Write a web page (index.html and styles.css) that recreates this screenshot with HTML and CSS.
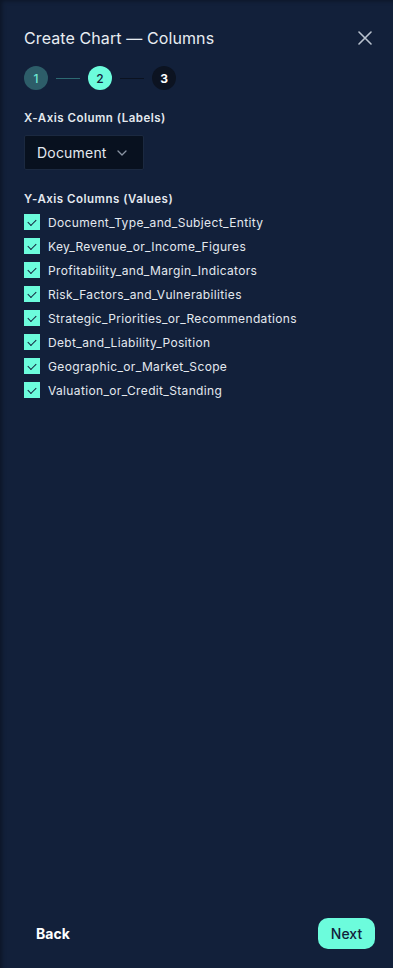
FILE: index.html
```html
<!DOCTYPE html>
<html lang="en">
<head>
    <meta charset="UTF-8">
    <meta name="viewport" content="width=device-width, initial-scale=1.0">
    <title>Create Chart</title>
    <link rel="stylesheet" href="styles.css">
</head>
<body>
    <div class="panel">
        <div class="header">
            <h1>Create Chart — Columns</h1>
            <button class="close" aria-label="Close">
                <svg width="14" height="14" viewBox="0 0 14 14"><path d="M1 1L13 13M13 1L1 13" stroke="#b9c2ce" stroke-width="1.6" stroke-linecap="round"/></svg>
            </button>
        </div>

        <div class="steps">
            <span class="step done">1</span>
            <span class="line done"></span>
            <span class="step active">2</span>
            <span class="line"></span>
            <span class="step">3</span>
        </div>

        <div class="field">
            <label class="field-label">X-Axis Column (Labels)</label>
            <div class="select">
                <span>Document</span>
                <svg width="10" height="6" viewBox="0 0 10 6"><path d="M1 1L5 5L9 1" stroke="#8a94a3" stroke-width="1.3" fill="none" stroke-linecap="round" stroke-linejoin="round"/></svg>
            </div>
        </div>

        <div class="field values">
            <label class="field-label">Y-Axis Columns (Values)</label>
            <ul class="checks">
                <li><span class="box"></span>Document_Type_and_Subject_Entity</li>
                <li><span class="box"></span>Key_Revenue_or_Income_Figures</li>
                <li><span class="box"></span>Profitability_and_Margin_Indicators</li>
                <li><span class="box"></span>Risk_Factors_and_Vulnerabilities</li>
                <li><span class="box"></span>Strategic_Priorities_or_Recommendations</li>
                <li><span class="box"></span>Debt_and_Liability_Position</li>
                <li><span class="box"></span>Geographic_or_Market_Scope</li>
                <li><span class="box"></span>Valuation_or_Credit_Standing</li>
            </ul>
        </div>

        <div class="footer">
            <button class="back">Back</button>
            <button class="next">Next</button>
        </div>
    </div>
</body>
</html>
```

FILE: styles.css
```css
body {
    margin: 0;
    background-color: #0d1728;
    font-family: Inter, "Noto Sans", sans-serif;
    color: #e4e9ef;
}
.panel {
    height: 968px;
    box-sizing: border-box;
    padding: 28px 18px 19px 24px;
    background-color: #12203a;
    box-shadow: inset 4px 3px 4px -2px rgba(0, 0, 0, 0.35);
    display: flex;
    flex-direction: column;
}
.header {
    display: flex;
    justify-content: space-between;
    align-items: center;
    height: 20px;
}
h1 {
    margin: 0;
    font-size: 16px;
    font-weight: 400;
    letter-spacing: 0.1px;
    color: #e8edf2;
}
.close {
    background: none;
    border: none;
    padding: 0;
    width: 14px;
    height: 14px;
    margin-right: 3px;
    display: flex;
}
.steps {
    display: flex;
    align-items: center;
    gap: 8px;
    margin-top: 18px;
}
.step {
    width: 24px;
    height: 24px;
    border-radius: 50%;
    background-color: #0c1321;
    color: #fff;
    font-size: 12px;
    font-weight: 700;
    display: flex;
    justify-content: center;
    align-items: center;
}
.step.done {
    background-color: #2d5d69;
    color: #6ee8d2;
    font-weight: 500;
}
.step.active {
    background-color: #6cfcdc;
    color: #12203a;
    font-weight: 500;
}
.line {
    width: 24px;
    height: 1px;
    background-color: #0b1220;
}
.line.done {
    background-color: #2d6a72;
}
.field {
    margin-top: 21px;
}
.field.values {
    margin-top: 22px;
}
.field-label {
    display: block;
    font-size: 11.5px;
    font-weight: 600;
    color: #e4e9ef;
    letter-spacing: 0.5px;
    margin-bottom: 10px;
}
.select {
    width: 120px;
    height: 35px;
    box-sizing: border-box;
    border: 1px solid #1b2940;
    border-radius: 2px;
    background-color: #08111f;
    display: flex;
    align-items: center;
    justify-content: space-between;
    padding: 0 16px 0 12px;
    font-size: 14px;
    letter-spacing: 0.2px;
    color: #e4e9ef;
}
.checks {
    list-style: none;
    margin: -6px 0 0;
    padding: 0;
}
.checks li {
    display: flex;
    align-items: center;
    gap: 8px;
    height: 24px;
    font-size: 12px;
    color: #e4e9ef;
    letter-spacing: 0.35px;
}
.box {
    width: 16px;
    height: 16px;
    background-color: #6cfcdc;
    display: flex;
    justify-content: center;
    align-items: center;
}
.box::after {
    content: "";
    width: 7px;
    height: 4px;
    border-left: 1.5px solid #12203a;
    border-bottom: 1.5px solid #12203a;
    transform: translateY(-1px) rotate(-45deg);
}
.footer {
    margin-top: auto;
    display: flex;
    justify-content: space-between;
    align-items: center;
}
.back {
    background: none;
    border: none;
    color: #fff;
    font-family: inherit;
    font-size: 14px;
    font-weight: 700;
    padding: 0 12px;
}
.next {
    background-color: #6cfcdc;
    color: #12203a;
    border: none;
    border-radius: 10px;
    font-family: inherit;
    font-size: 14px;
    font-weight: 500;
    width: 57px;
    height: 31px;
}
```
